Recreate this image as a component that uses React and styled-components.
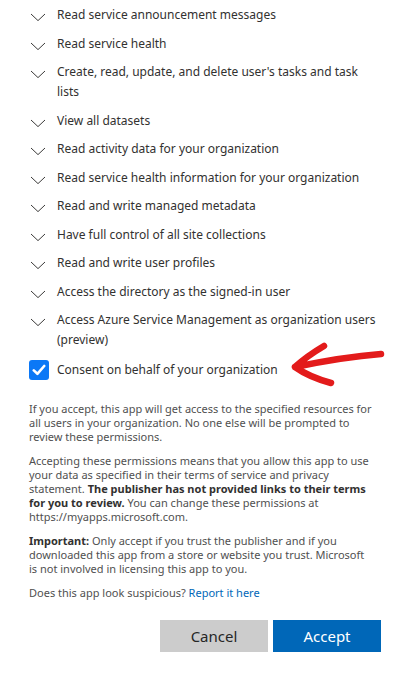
import React from "react";
import styled, { createGlobalStyle } from "styled-components";

const permissions = [
  "Read service announcement messages",
  "Read service health",
  "Create, read, update, and delete user's tasks and task lists",
  "View all datasets",
  "Read activity data for your organization",
  "Read service health information for your organization",
  "Read and write managed metadata",
  "Have full control of all site collections",
  "Read and write user profiles",
  "Access the directory as the signed-in user",
  "Access Azure Service Management as organization users (preview)"
];

const Chevron = () => (
  <ChevronIcon width="16" height="9" viewBox="0 0 16 9">
    <path d="M1 1 L8 7.6 L15 1" fill="none" stroke="#3b3a39" strokeWidth="1" />
  </ChevronIcon>
);

const App = () => {
  return (
    <Page>
      <GlobalStyle />
      <List>
        {permissions.map((p) => (
          <Item key={p}>
            <Chevron />
            <ItemText>{p}</ItemText>
          </Item>
        ))}
      </List>

      <ConsentRow>
        <Check>
          <svg width="14" height="12" viewBox="0 0 14 12">
            <path
              d="M1.8 6.4 L5.4 9.8 L12.2 2"
              fill="none"
              stroke="white"
              strokeWidth="2.6"
              strokeLinecap="round"
              strokeLinejoin="round"
            />
          </svg>
        </Check>
        <ItemText>Consent on behalf of your organization</ItemText>
        <Arrow width="110" height="52" viewBox="0 0 110 52">
          <path
            d="M98 14 Q60 17 12 27 M41 6 Q24 16 12 27 Q26 37 48 43"
            fill="none"
            stroke="#e31b1b"
            strokeWidth="6.5"
            strokeLinecap="round"
            strokeLinejoin="round"
          />
        </Arrow>
      </ConsentRow>

      <Text>
        <Para>
          If you accept, this app will get access to the specified resources for
          all users in your organization. No one else will be prompted to review
          these permissions.
        </Para>
        <Para>
          Accepting these permissions means that you allow this app to use your
          data as specified in their terms of service and privacy statement.{" "}
          <b>The publisher has not provided links to their terms for you to review.</b>{" "}
          You can change these permissions at https://myapps.microsoft.com.
        </Para>
        <Para>
          <b>Important:</b> Only accept if you trust the publisher and if you
          downloaded this app from a store or website you trust. Microsoft
          is{"\u00a0"}not involved in licensing this app to you.
        </Para>
        <Para>
          Does this app look suspicious? <Link href="#">Report it here</Link>
        </Para>
      </Text>

      <Buttons>
        <Button>Cancel</Button>
        <Button primary>Accept</Button>
      </Buttons>
    </Page>
  );
};

export default App;

const GlobalStyle = createGlobalStyle`
  body {
    margin: 0;
    background: #ffffff;
    font-family: "Noto Sans", "Open Sans", sans-serif;
  }
`;

const Page = styled.div`
  position: relative;
  width: 414px;
  height: 685px;
  box-sizing: border-box;
  padding: 5px 33px 0 29px;
  overflow: hidden;
`;

const List = styled.div`
  display: flex;
  flex-direction: column;
  gap: 8.5px;
`;

const Item = styled.div`
  display: flex;
  align-items: flex-start;
  gap: 11px;
  padding-left: 1px;
`;

const ChevronIcon = styled.svg`
  flex: none;
  margin-top: 8px;
`;

const ItemText = styled.span`
  font-size: 12px;
  line-height: 20px;
  color: #323130;
`;

const ConsentRow = styled.div`
  position: relative;
  display: flex;
  align-items: center;
  gap: 8px;
  margin-top: 10px;
  height: 20px;
`;

const Check = styled.span`
  flex: none;
  width: 20px;
  height: 20px;
  border-radius: 3px;
  background: #0b78f6;
  display: flex;
  align-items: center;
  justify-content: center;
`;

const Arrow = styled.svg`
  position: absolute;
  left: 254px;
  top: -20px;
`;

const Text = styled.div`
  margin-top: 22px;
  display: flex;
  flex-direction: column;
  gap: 10px;
`;

const Para = styled.p`
  margin: 0;
  font-size: 11px;
  line-height: 14px;
  color: #505050;

  b {
    color: #323130;
  }
`;

const Link = styled.a`
  color: #0067b8;
  text-decoration: none;
`;

const Buttons = styled.div`
  display: flex;
  justify-content: flex-end;
  gap: 5px;
  margin-top: 20px;
`;

const Button = styled.button`
  width: 108px;
  height: 32px;
  border: none;
  padding: 0;
  font-family: inherit;
  font-size: 15px;
  background: ${(p) => (p.primary ? "#0067b8" : "#cccccc")};
  color: ${(p) => (p.primary ? "#ffffff" : "#262626")};
`;
